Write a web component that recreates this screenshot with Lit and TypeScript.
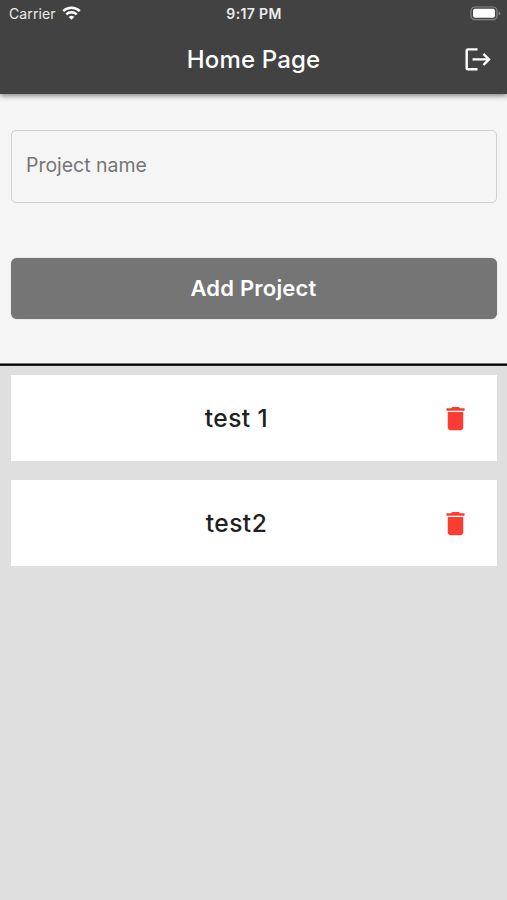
import { LitElement, html, css } from "lit";
import { customElement, state } from "lit/decorators.js";

@customElement("status-bar")
class StatusBar extends LitElement {
  static styles = css`
    :host { display: grid; grid-template-columns: 1fr auto 1fr; align-items: center; height: 26px; padding: 0 6px 0 9px; font-size: 14px; color: #ececec; }
    .carrier { display: flex; align-items: center; gap: 6px; letter-spacing: 0.1px; }
    .time { font-size: 14px; font-weight: 600; letter-spacing: 0.35px; transform: translateX(-1px); }
    .battery { justify-self: end; display: block; }
    svg { display: block; }
  `;
  render() {
    return html`
      <div class="carrier">
        <span>Carrier</span>
        <svg width="19" height="14" viewBox="0 0 19 14" fill="none" stroke="#fff" stroke-width="2.5">
          <path d="M1.2 5.2C5.9 .7 13.1 .7 17.8 5.2" />
          <path d="M4.3 8.4C7.3 5.6 11.7 5.6 14.7 8.4" />
          <path d="M9.5 13.8 6.7 11Q9.5 8.7 12.3 11Z" fill="#fff" stroke="none" />
        </svg>
      </div>
      <div class="time">9:17 PM</div>
      <svg class="battery" width="31" height="15" viewBox="0 0 31 15">
        <rect x="1" y="1" width="26" height="12.6" rx="3.8" fill="none" stroke="#858585" stroke-width="1.2" />
        <rect x="3" y="2.8" width="22" height="9" rx="2" fill="#fff" />
        <path d="M28.6 5.2Q30.4 6 30.4 7.3T28.6 9.4Z" fill="#858585" />
      </svg>
    `;
  }
}

@customElement("project-row")
class ProjectRow extends LitElement {
  static properties = { name: {} };
  declare name: string;
  static styles = css`
    :host { display: grid; grid-template-columns: 1fr 50px; align-items: center; height: 86px; padding: 0 17px 0 0; box-sizing: border-box; background: #fff; }
    .name { padding-left: 32px; text-align: center; font-size: 24.5px; font-weight: 450; letter-spacing: 0.45px; color: #212121; }
    .remove { display: block; justify-self: center; }
  `;
  render() {
    return html`
      <div class="name">${this.name}</div>
      <svg class="remove" width="31" height="31" viewBox="0 0 24 24" fill="#f93d30">
        <path d="M6 19c0 1.1.9 2 2 2h8c1.1 0 2-.9 2-2V7H6v12zM19 4h-3.5l-1-1h-5l-1 1H5v2h14V4z" />
      </svg>
    `;
  }
}

@customElement("app-root")
class AppRoot extends LitElement {
  @state() private projects = ["test 1", "test2"];

  static styles = css`
    :host { display: flex; flex-direction: column; height: 900px; overflow: hidden; background: #dfdfdf; font-family: Inter, "Liberation Sans", sans-serif; }
    .header { position: relative; height: 94px; flex: none; background: #424242; box-shadow: 0 2px 5px rgba(0, 0, 0, 0.45); }
    .bar { display: grid; grid-template-columns: 60px 1fr 60px; align-items: center; height: 66px; }
    .title { grid-column: 2; text-align: center; font-size: 24px; font-weight: 500; letter-spacing: 0.15px; color: #fff; }
    .logout { display: block; justify-self: center; }
    .form { flex: none; height: 269px; box-sizing: border-box; padding: 36px 10px 0 11px; background: #f5f5f5; }
    .field { display: flex; align-items: center; height: 73px; box-sizing: border-box; padding: 0 14px 3px; border: 1.5px solid #d0d0d0; border-radius: 5px; font-size: 19.5px; letter-spacing: -0.03px; color: #757575; }
    .add { display: flex; align-items: center; justify-content: center; width: 100%; height: 61px; margin-top: 55px; padding: 0 1px 1px 0; border: 0; border-radius: 6px; background: #757575; color: #fff; font: 600 22px Inter, sans-serif; letter-spacing: 0.2px; box-shadow: 0 0 1px #888; }
    .rule { flex: none; height: 3px; background: linear-gradient(#777 0 1px, #000 1px 2px, #222 2px 3px); }
    .list { display: flex; flex-direction: column; gap: 19px; padding: 9px 10px 0 11px; }
  `;

  render() {
    return html`
      <div class="header">
        <status-bar></status-bar>
        <div class="bar">
          <div class="title">Home Page</div>
          <svg class="logout" width="28" height="26" viewBox="0 0 28 26" fill="none" stroke="#fff" stroke-width="2.4">
            <path d="M14.5 3.4H5Q3.7 3.4 3.7 4.7V22Q3.7 23.3 5 23.3H14.5M9.5 13.4H26M20.4 7.8 26 13.4 20.4 19" />
          </svg>
        </div>
      </div>
      <div class="form">
        <div class="field">Project name</div>
        <button class="add">Add Project</button>
      </div>
      <div class="rule"></div>
      <div class="list">
        ${this.projects.map((p) => html`<project-row .name=${p}></project-row>`)}
      </div>
    `;
  }
}
